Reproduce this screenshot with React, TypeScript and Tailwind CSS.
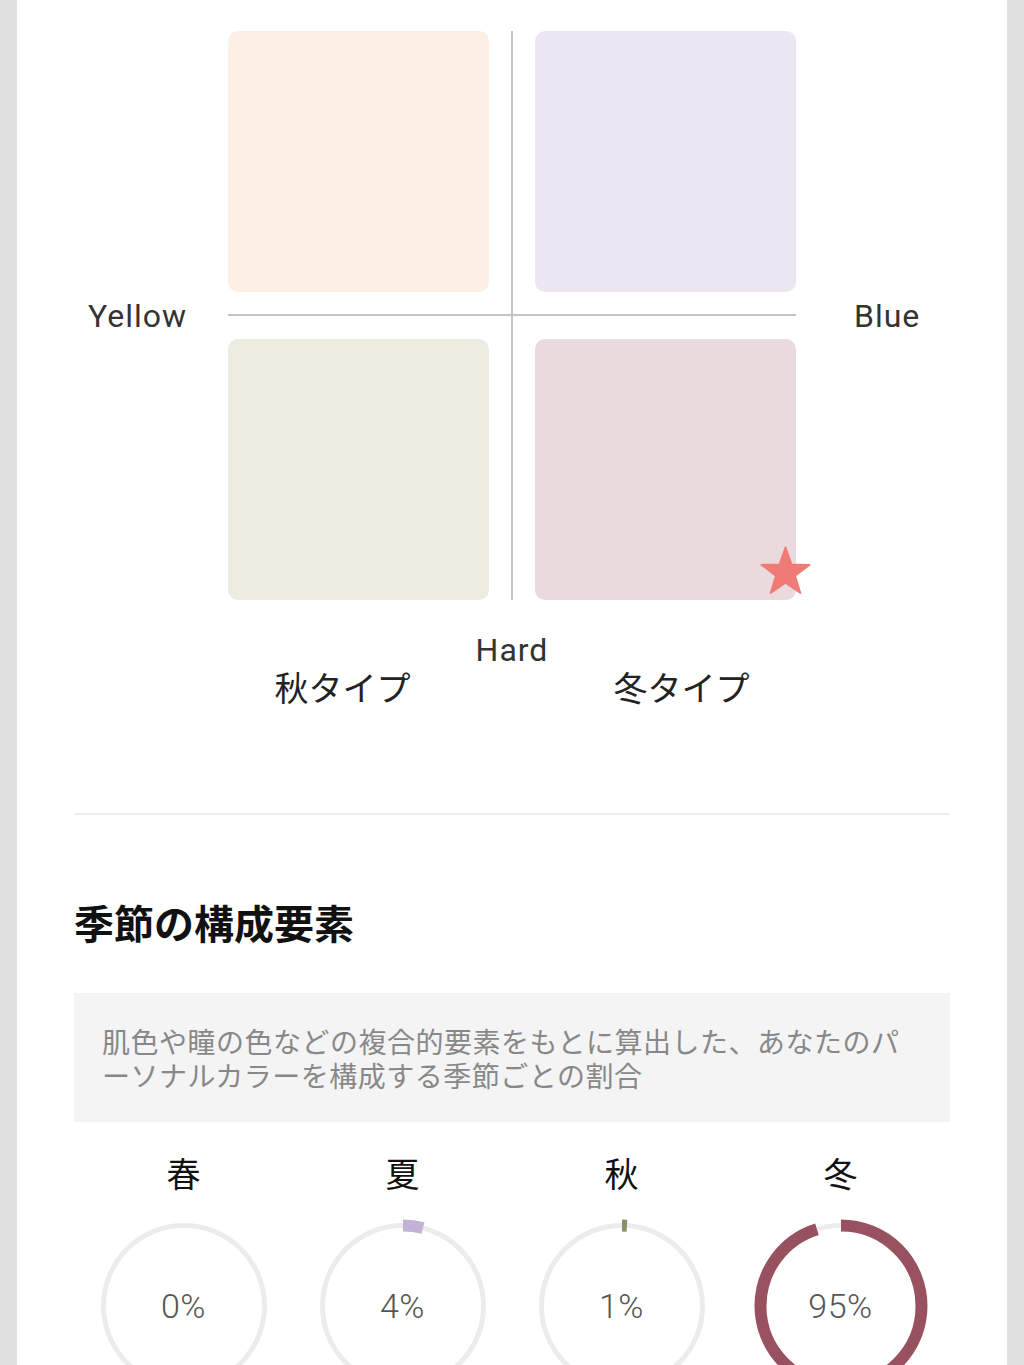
import * as React from "react"

// ============================================================================
// DATA
// ============================================================================

const SEASONS = [
    { label: "春", value: 0, color: "#f3b08a" },
    { label: "夏", value: 4, color: "#c3b2d6" },
    { label: "秋", value: 1, color: "#8a9062" },
    { label: "冬", value: 95, color: "#98525f" },
]

const LATIN = { fontFamily: "Roboto, 'Noto Sans CJK JP', sans-serif" }
const JP = { fontFamily: "'Noto Sans CJK JP', 'Noto Sans', sans-serif" }

// ============================================================================
// PARTS
// ============================================================================

function Star() {
    return (
        <svg viewBox="0 0 24 24" className="absolute left-[224px] top-[206px] w-[53px] h-[53px]">
            <polygon
                points="12,1 14.7,8.78 22.94,8.95 16.37,13.92 18.76,21.8 12,17.1 5.24,21.8 7.63,13.92 1.06,8.95 9.3,8.78"
                fill="#f07b74"
                stroke="#f07b74"
                strokeWidth="0.8"
                strokeLinejoin="round"
            />
        </svg>
    )
}

function Ring({ value, color }: { value: number; color: string }) {
    const r = 80.5
    const c = 2 * Math.PI * r
    const len = (c * value) / 100
    return (
        <div className="relative w-[180px] h-[180px]">
            <svg viewBox="0 0 180 180" className="absolute inset-0 w-full h-full">
                <circle cx="90" cy="90" r={r} fill="none" stroke="#ececec" strokeWidth="5" />
                {value > 0 && (
                    <circle
                        cx="90"
                        cy="90"
                        r={r}
                        fill="none"
                        stroke={color}
                        strokeWidth="12"
                        strokeDasharray={`${len} ${c}`}
                        transform="rotate(-90 90 90)"
                    />
                )}
            </svg>
            <div className="absolute inset-0 flex items-center justify-center text-[34px] font-light tracking-[0.5px] text-[#555]" style={LATIN}>
                {value}%
            </div>
        </div>
    )
}

// ============================================================================
// APP
// ============================================================================

export default function App() {
    return (
        <div className="min-h-screen bg-[#e0e0e0] px-[17px]">
            <div className="bg-white min-h-screen pt-[31px] pb-[80px]">
                {/* Matrix */}
                <div className="flex items-center">
                    <div className="w-[211px] pr-[41px] text-right text-[32px] tracking-[1px] text-[#333]" style={LATIN}>Yellow</div>
                    <div className="relative grid grid-cols-2 gap-x-[46px] gap-y-[47px] w-[568px]">
                        <div className="h-[261px] rounded-[10px] bg-[#fcf0e4]" />
                        <div className="h-[261px] rounded-[10px] bg-[#ebe6f2]" />
                        <div className="h-[261px] rounded-[10px] bg-[#ecece1]" />
                        <div className="relative h-[261px] rounded-[10px] bg-[#ead9dd]">
                            <Star />
                        </div>
                        <div className="absolute left-[283px] top-0 bottom-0 w-[2px] bg-[#c4c4c4]" />
                        <div className="absolute left-0 right-0 top-[283px] h-[2px] bg-[#c4c4c4]" />
                    </div>
                    <div className="pl-[58px] text-[32px] tracking-[1px] text-[#333]" style={LATIN}>Blue</div>
                </div>

                <div className="mt-[31px] text-center text-[32px] leading-[38px] tracking-[1px] text-[#333]" style={LATIN}>Hard</div>
                <div className="flex justify-center gap-[203px] text-[34px] leading-[36px] text-[#222]" style={JP}>
                    <span>秋タイプ</span>
                    <span>冬タイプ</span>
                </div>

                <div className="px-[57px]">
                    <div className="mt-[108px] h-[2px] bg-[#ececec]" />

                    <h2 className="mt-[84px] text-[40px] leading-[46px] font-bold text-[#111]" style={JP}>季節の構成要素</h2>

                    <div className="mt-[48px] bg-[#f4f4f4] pl-[28px] pr-[38px] pt-[31px] pb-[30px] text-[28px] leading-[34px] tracking-[0.5px] text-[#888]" style={JP}>
                        肌色や瞳の色などの複合的要素をもとに算出した、あなたのパーソナルカラーを構成する季節ごとの割合
                    </div>

                    <div className="grid grid-cols-4 mt-[31px]">
                        {SEASONS.map((s) => (
                            <div key={s.label} className="flex flex-col items-center">
                                <div className="text-[34px] leading-[40px] text-[#111]" style={JP}>{s.label}</div>
                                <div className="mt-[23px]">
                                    <Ring value={s.value} color={s.color} />
                                </div>
                            </div>
                        ))}
                    </div>
                </div>
            </div>
        </div>
    )
}
